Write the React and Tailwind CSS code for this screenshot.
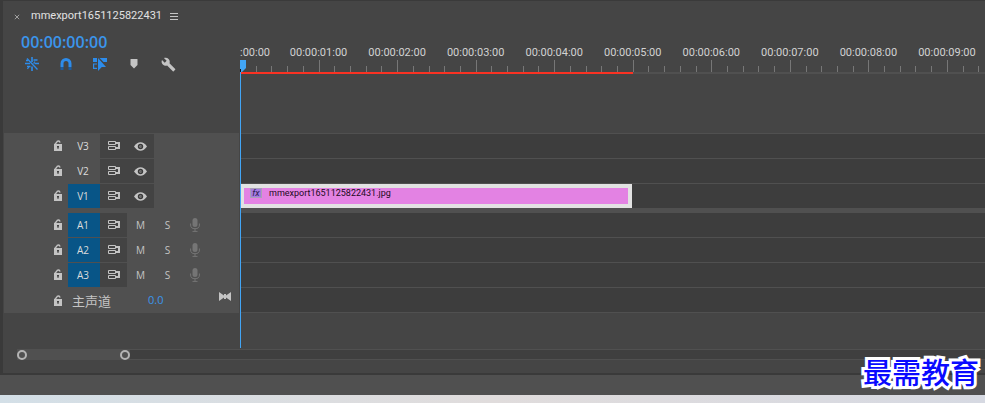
import { useState } from "react";
import { MdBuild } from "react-icons/md";

const VISIBLE_SECONDS = 9.483;
const CLIP_SECONDS = 5;

const videoTracks = [
    { id: "V3", targeted: false },
    { id: "V2", targeted: false },
    { id: "V1", targeted: true },
];
const audioTracks = [{ id: "A1" }, { id: "A2" }, { id: "A3" }];

const percent = (seconds) => `${(seconds / VISIBLE_SECONDS) * 100}%`;

function NestIcon() {
    return (
        <svg width="14" height="14" viewBox="0 0 14 14" fill="none" stroke="currentColor">
            <path d="M2 1.500l10.500 11" strokeWidth="1.300" />
            <path d="M7 0v5M7 9.500V14" strokeWidth="1.600" />
            <path d="M4 9.500L2.500 12M8.500 6.500L10 4.500" strokeWidth="1.200" />
            <path d="M0 6.500h5M9.500 6.500H14M8.500 3h4M2 9.500h3.500M1 3.500h2" strokeWidth="1.600" />
        </svg>
    );
}

function MagnetIcon() {
    return (
        <svg width="12" height="12" viewBox="0 0 12 12" fill="none" strokeWidth="3">
            <path d="M2 9V5.5a4 4 0 0 1 8 0V9" stroke="currentColor" />
            <path d="M2 9v3M10 9v3" stroke="#1d5c9e" />
        </svg>
    );
}

function LinkedIcon() {
    return (
        <svg width="15" height="14" viewBox="0 0 15 14" fill="currentColor">
            <path d="M0 1h4v4H0zM6.500 1H14v4h-3.500z" />
            <path d="M5 1v13l3.800-4H13z" />
            <path d="M4 7H.6v4.400H4" fill="none" stroke="currentColor" strokeWidth="1.2" />
        </svg>
    );
}

function MarkerIcon() {
    return (
        <svg width="8" height="10" viewBox="0 0 8 10" fill="currentColor">
            <path d="M1 0h6q.5 0 .5.5V6L4 9.5.5 6V.5Q.5 0 1 0z" />
        </svg>
    );
}

function LockIcon() {
    return (
        <svg width="8" height="12" viewBox="0 0 8 12">
            <path d="M1.200 5.500V3.800Q1.200 3 2.400 2.800 3 1 4.400 1 5.800 1 6 2.600" fill="none" stroke="currentColor" strokeWidth="1.3" />
            <path d="M0 4h8v7H0z" fill="currentColor" />
            <path d="M3 6h2v1.5h-.5V9h-1V7.5H3z" fill="#404040" />
        </svg>
    );
}

function SyncIcon() {
    return (
        <svg width="13" height="10" viewBox="0 0 13 10" fill="none" stroke="currentColor">
            <path d="M1.500.5h7v3h-7zM1.500 5.500h7v3h-7z" />
            <path d="M9 2h3v5H9" strokeWidth="2" />
        </svg>
    );
}

function EyeIcon() {
    return (
        <svg width="13" height="9" viewBox="0 0 13 9">
            <path d="M0 4.5Q3 .3 6.5.3T13 4.5Q10 8.7 6.5 8.7T0 4.5z" fill="currentColor" />
            <circle cx="6.5" cy="4.5" r="2.7" fill="#3a3a3a" />
            <circle cx="6.5" cy="4.5" r="1.3" fill="#8a8a8a" />
            <circle cx="7" cy="4.5" r=".6" fill="#3a3a3a" />
        </svg>
    );
}

function MicIcon() {
    return (
        <svg width="10" height="14" viewBox="0 0 10 14">
            <rect x="2.5" y="0" width="5" height="9" rx="2.5" fill="currentColor" />
            <path d="M.6 5.5V7a4.4 3.7 0 0 0 8.8 0V5.5M5 11v2.4M2.5 13.4h5" fill="none" stroke="currentColor" />
        </svg>
    );
}

function BowtieIcon() {
    return (
        <svg width="12" height="9" viewBox="0 0 12 9" fill="currentColor">
            <path d="M0 0l5 3.500V2h2v1.500L12 0v9L7 5.500V7H5V5.500L0 9z" />
        </svg>
    );
}

function IconButton({ label, className = "", children }) {
    return (
        <button type="button" aria-label={label} className={`flex items-center justify-center ${className}`}>
            {children}
        </button>
    );
}

function TrackHead({ id, targeted, children }) {
    const [on, setOn] = useState(targeted);

    return (
        <div className="flex h-6 mb-px pl-11 text-[#c4c4c4]">
            <IconButton label={`Lock ${id}`} className="w-5">
                <LockIcon />
            </IconButton>
            <button
                type="button"
                aria-pressed={on}
                onClick={() => setOn(!on)}
                className={`w-8 pr-0.5 text-[10px] text-[#dcdcdc] ${on ? "bg-[#085587]" : ""}`}
            >
                {id}
            </button>
            <IconButton label={`Sync lock ${id}`} className="w-[27px] bg-[#434343]">
                <SyncIcon />
            </IconButton>
            {children}
        </div>
    );
}

function TrackHeads() {
    return (
        <div className="ml-px mr-px pt-px bg-[#505050]">
            {videoTracks.map((track) => (
                <TrackHead key={track.id} {...track}>
                    <IconButton label={`Toggle ${track.id} output`} className="w-[27px] bg-[#434343]">
                        <EyeIcon />
                    </IconButton>
                </TrackHead>
            ))}
            <div className="h-1" />
            {audioTracks.map((track) => (
                <TrackHead key={track.id} id={track.id} targeted>
                    <button type="button" aria-label={`Mute ${track.id}`} className="w-[27px] text-[10px]">M</button>
                    <button type="button" aria-label={`Solo ${track.id}`} className="w-[27px] text-[10px]">S</button>
                    <IconButton label={`Record ${track.id}`} className="w-[27px] text-[#757575]">
                        <MicIcon />
                    </IconButton>
                </TrackHead>
            ))}
            <div className="flex h-[25px] items-center pl-11 pr-2 text-[#c4c4c4]">
                <IconButton label="Lock master" className="w-5 h-full">
                    <LockIcon />
                </IconButton>
                <span className="w-20 pl-1 text-[13px] leading-4">主声道</span>
                <button type="button" className="text-[11px] text-[#3b95ec]">0.0</button>
                <IconButton label="Keyframes" className="ml-auto mb-2">
                    <BowtieIcon />
                </IconButton>
            </div>
        </div>
    );
}

function Ruler() {
    return (
        <div className="pt-11">
            <div className="flex overflow-hidden">
                {Array.from({ length: 10 }, (_, second) => (
                    <div key={second} className="flex-none" style={{ width: percent(1) }}>
                        {second === 0 ? (
                            <div className="h-[15px] font-[Roboto,sans-serif] text-[11px] leading-4 text-[#d2d2d2]">:00:00</div>
                        ) : (
                            <div className="flex w-0 h-[15px] justify-center whitespace-nowrap font-[Roboto,sans-serif] text-[11px] leading-4 text-[#d2d2d2]">
                                00:00:0{second}:00
                            </div>
                        )}
                        <div className="flex items-end h-3">
                            <div className="flex-1 h-3 border-l border-[#777777]" />
                            <div className="flex-1 h-1.5 border-l border-[#777777]" />
                            <div className="flex-1 h-1.5 border-l border-[#777777]" />
                            <div className="flex-1 h-1.5 border-l border-[#777777]" />
                            <div className="flex-1 h-1.5 border-l border-[#777777]" />
                        </div>
                    </div>
                ))}
            </div>
            <div className="h-0.5 bg-[#505050]">
                <div className="h-full bg-[#fa3223]" style={{ width: percent(CLIP_SECONDS) }} />
            </div>
        </div>
    );
}

function Clip() {
    return (
        <div className="pr-px" style={{ width: percent(CLIP_SECONDS) }}>
            <div className="flex h-6 items-start border-4 border-[#e2e2e2] bg-[#e382e3] pl-1.5 font-[Roboto,sans-serif]">
                <span className="w-3 h-2.5 border border-[#a9a0b8] bg-[#a57be0] text-center text-[9px] leading-2 italic text-[#2b1a50]">
                    fx
                </span>
                <span className="ml-[7px] text-[9px] leading-2.5 text-[#1c0a1c]">mmexport1651125822431.jpg</span>
            </div>
        </div>
    );
}

function Lanes() {
    return (
        <div className="border-t border-[#505050]">
            {videoTracks.map((track) => (
                <div key={track.id} className="h-[25px] border-b border-[#505050] bg-[#3d3d3d]">
                    {track.id === "V1" && <Clip />}
                </div>
            ))}
            <div className="h-1 bg-[#505050]" />
            {[...audioTracks, { id: "master" }].map((track) => (
                <div key={track.id} className="h-[25px] border-b border-[#505050] bg-[#3d3d3d]" />
            ))}
        </div>
    );
}

function Playhead() {
    return (
        <div className="absolute left-0 top-[59px] bottom-px w-px bg-[#42a5f5]">
            <svg width="6" height="12" viewBox="0 0 6 12" className="max-w-none">
                <path d="M0 0h6v8l-4 4H0z" fill="#42a5f5" />
                <path d="M0 9h1v3H0z" fill="#111111" />
            </svg>
        </div>
    );
}

function ZoomBar() {
    const handle = "size-2.5 rounded-full border-2 border-[#b4b4b4] bg-[#505050]";

    return (
        <div className="flex h-[11px] ml-3.5">
            <div className="flex w-[113px] items-center justify-between bg-[#505050]">
                <button type="button" aria-label="Zoom start" className={handle} />
                <button type="button" aria-label="Zoom end" className={handle} />
            </div>
            <div className="flex-1 border-y border-[#505050] bg-[#3f3f3f]" />
        </div>
    );
}

export default function App() {
    return (
        <div className="relative bg-[#505050] font-['Open_Sans','Noto_Sans_CJK_SC',sans-serif]">
            <div className="pt-px pl-[3px] pb-0.5 bg-[#3a3a3a]">
                <div className="pb-[13px] bg-[#454545]">
                    <div className="flex">
                        <div className="w-[237px] flex-none">
                            <div className="flex h-[29px] items-center pt-0.5 pl-2.5 font-[Roboto,sans-serif] text-[11px]">
                                <IconButton label="Close" className="w-2 text-[#a0a0a0]">
                                    <svg width="6" height="6" viewBox="0 0 6 6" fill="none" stroke="currentColor">
                                        <path d="M.8.8l4.400 4.400M5.200.8L.8 5.200" />
                                    </svg>
                                </IconButton>
                                <h1 className="ml-2.5 text-[#e2e2e2]">mmexport1651125822431</h1>
                                <IconButton label="Panel menu" className="ml-2 text-[#c4c4c4]">
                                    <svg width="8" height="7" viewBox="0 0 8 7" stroke="currentColor">
                                        <path d="M0 .5h8M0 3.500h8M0 6.500h8" />
                                    </svg>
                                </IconButton>
                            </div>
                            <div className="flex h-6 items-center pl-[18px] text-base font-semibold text-[#3b95ec]">
                                00:00:00:00
                            </div>
                            <div className="flex h-5 mb-[59px] items-center pl-3 text-[#2d8ceb]">
                                <IconButton label="Nest sequences" className="w-[34px]">
                                    <NestIcon />
                                </IconButton>
                                <IconButton label="Snap" className="w-[34px]">
                                    <MagnetIcon />
                                </IconButton>
                                <IconButton label="Linked selection" className="w-[34px]">
                                    <LinkedIcon />
                                </IconButton>
                                <IconButton label="Add marker" className="w-[34px] text-[#c4c4c4]">
                                    <MarkerIcon />
                                </IconButton>
                                <IconButton label="Timeline settings" className="w-[34px] text-[#c4c4c4]">
                                    <MdBuild size={15} />
                                </IconButton>
                            </div>
                            <TrackHeads />
                        </div>
                        <div className="relative flex-1 min-w-0 pb-9">
                            <Ruler />
                            <div className="h-[59px]" />
                            <Lanes />
                            <Playhead />
                        </div>
                    </div>
                    <ZoomBar />
                </div>
            </div>
            <div className="h-5" />
            <div className="h-2 bg-linear-to-r from-[#d3dfe7] via-[#e0dcdc] to-[#d6d9e2]" />
            <div className="absolute right-1.5 bottom-2.5 text-[29px] leading-11 font-medium text-[#0a0aff] [-webkit-text-stroke:6px_white] [paint-order:stroke_fill] [stroke-linejoin:round] font-[KaiTi,'Noto_Sans_CJK_SC',sans-serif]">
                最需教育
            </div>
        </div>
    );
}
